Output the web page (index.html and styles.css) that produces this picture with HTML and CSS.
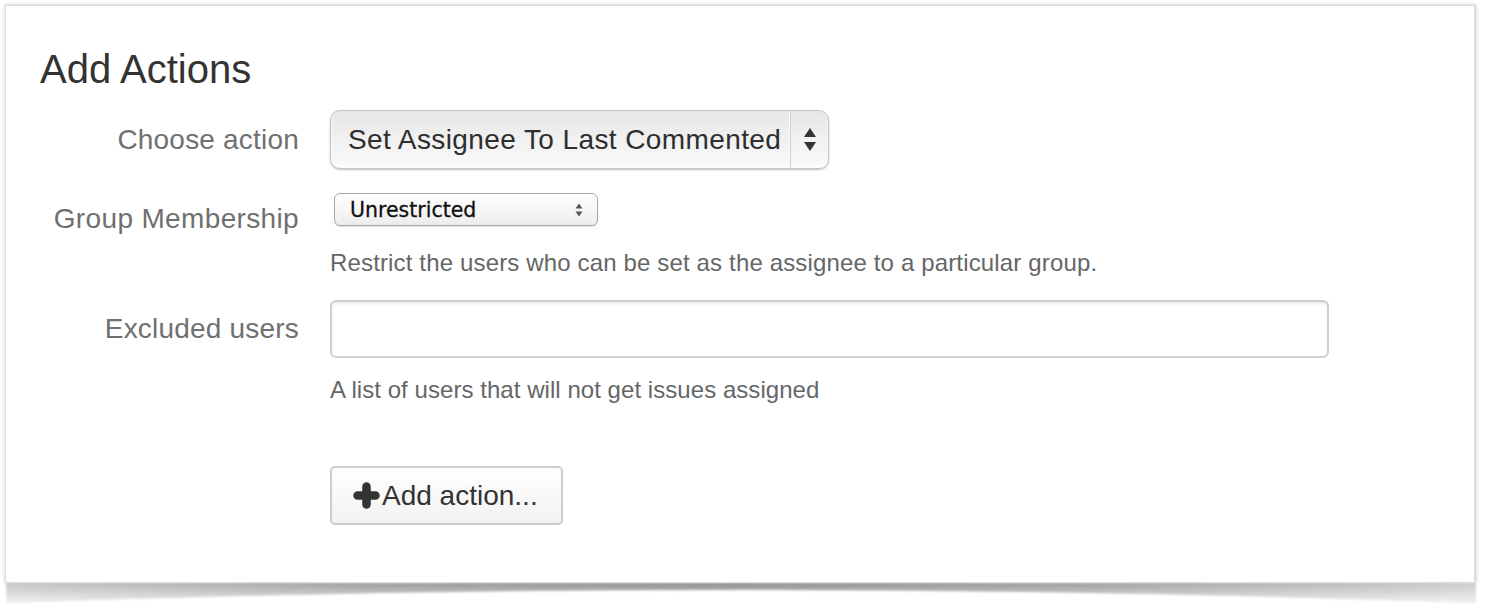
FILE: index.html
```html
<!DOCTYPE html>
<html lang="en">
<head>
<meta charset="utf-8">
<title>Add Actions</title>
<link rel="stylesheet" href="styles.css">
</head>
<body>
<div class="page">
  <div class="card">
    <h2 class="title">Add Actions</h2>
    <div class="form">
      <div class="row row-center">
        <div class="label">Choose action</div>
        <div class="field">
          <div class="big-select">
            <span class="big-select-text">Set Assignee To Last Commented</span>
            <span class="big-select-arrows">
              <svg width="14" height="26" viewBox="0 0 14 26"><path d="M1 10 L7 1 L13 10 Z" fill="#333"/><path d="M1 15 L7 24 L13 15 Z" fill="#333"/></svg>
            </span>
          </div>
        </div>
      </div>
      <div class="row row-2">
        <div class="label label-low">Group Membership</div>
        <div class="field">
          <div class="small-select">
            <span class="small-select-text">Unrestricted</span>
            <svg class="small-arrows" width="8" height="14" viewBox="0 0 8 14"><path d="M0.5 5.5 L4 0.5 L7.5 5.5 Z" fill="#555"/><path d="M0.5 8.5 L4 13.5 L7.5 8.5 Z" fill="#555"/></svg>
          </div>
          <div class="help help-1">Restrict the users who can be set as the assignee to a particular group.</div>
        </div>
      </div>
      <div class="row row-3">
        <div class="label label-input">Excluded users</div>
        <div class="field">
          <div class="text-input"></div>
          <div class="help help-2">A list of users that will not get issues assigned</div>
        </div>
      </div>
      <div class="row row-4">
        <div class="label"></div>
        <div class="field">
          <button class="add-btn" type="button">
            <svg class="plus" width="27" height="27" viewBox="0 0 27 27"><path d="M13.5 4.5 V22.5 M4.5 13.5 H22.5" stroke="#333" stroke-width="8.5" stroke-linecap="round" fill="none"/></svg>
            <span>Add action...</span>
          </button>
        </div>
      </div>
    </div>
  </div>
  <svg class="curl" width="1472" height="24" viewBox="0 0 1472 24">
    <defs>
      <linearGradient id="gh" x1="0" y1="0" x2="1" y2="0">
        <stop offset="0" stop-color="#c6c6c6"/>
        <stop offset="0.25" stop-color="#9c9c9c"/>
        <stop offset="0.5" stop-color="#8e8e8e"/>
        <stop offset="0.75" stop-color="#a0a0a0"/>
        <stop offset="1" stop-color="#cbcbcb"/>
      </linearGradient>
      <linearGradient id="gv" x1="0" y1="0" x2="0" y2="1">
        <stop offset="0" stop-color="#fff" stop-opacity="0"/>
        <stop offset="1" stop-color="#fff" stop-opacity="0.75"/>
      </linearGradient>
      <filter id="bl" x="-5%" y="-50%" width="110%" height="200%">
        <feGaussianBlur stdDeviation="1"/>
      </filter>
    </defs>
    <g filter="url(#bl)">
      <path d="M1 0 H1471 V20 Q736 -6 1 20 Z" fill="url(#gh)"/>
      <path d="M1 0 H1471 V20 Q736 -6 1 20 Z" fill="url(#gv)"/>
    </g>
  </svg>
</div>
</body>
</html>
```
FILE: styles.css
```css
html, body {
  margin: 0;
  padding: 0;
  background: #ffffff;
}

body {
  font-family: "Liberation Sans", Arial, Helvetica, sans-serif;
  color: #333333;
}

.page {
  padding: 5px 0 0 5px;
}

.card {
  width: 1470px;
  box-sizing: border-box;
  border: 1px solid #dcdcdc;
  background: #ffffff;
  box-shadow: 0 0 4px rgba(0, 0, 0, 0.18), 2px 0 3px rgba(0, 0, 0, 0.08);
  padding: 41px 0 57px 34px;
}

.title {
  margin: 0;
  font-size: 40px;
  line-height: 45px;
  font-weight: normal;
  color: #333333;
}

.form {
  margin-top: 18px;
}

.row {
  display: flex;
  align-items: flex-start;
}

.row-center {
  align-items: center;
}

.row-2 {
  margin-top: 24px;
}

.row-3 {
  margin-top: 22px;
}

.row-4 {
  margin-top: 61px;
}

.label {
  width: 259px;
  margin-right: 31px;
  text-align: right;
  font-size: 28px;
  line-height: 59px;
  letter-spacing: 0.2px;
  color: #707070;
  flex: none;
}

.label-low {
  line-height: 33px;
  padding-top: 9px;
  letter-spacing: 0.35px;
}

.label-input {
  line-height: 58px;
}

.field {
  display: flex;
  flex-direction: column;
  align-items: flex-start;
}

.big-select {
  width: 499px;
  height: 59px;
  box-sizing: border-box;
  border: 1px solid #c6c6c6;
  border-radius: 10px;
  background: linear-gradient(#e6e6e6, #f0f0f0 45%, #f6f6f6 80%, #fbfbfb);
  box-shadow: 0 1px 2px rgba(0, 0, 0, 0.28), inset 0 -2px 3px rgba(255, 255, 255, 0.9);
  display: flex;
  align-items: center;
}

.big-select-text {
  padding-left: 17px;
  font-size: 28px;
  letter-spacing: 0.4px;
  color: #2e2e2e;
  flex: 1;
  white-space: nowrap;
}

.big-select-arrows {
  width: 37px;
  height: 100%;
  border-left: 1px solid #d2d2d2;
  box-shadow: -1px 0 0 #fafafa;
  display: flex;
  align-items: center;
  justify-content: center;
}

.small-select {
  margin-left: 4px;
  width: 264px;
  height: 33px;
  box-sizing: border-box;
  border: 1px solid #a8a8a8;
  border-radius: 6px;
  background: linear-gradient(#ffffff, #f7f7f7 50%, #ececec);
  box-shadow: 0 1px 1px rgba(0, 0, 0, 0.12);
  display: flex;
  align-items: center;
}

.small-select-text {
  flex: 1;
  padding-left: 15px;
  font-family: "DejaVu Sans", Verdana, sans-serif;
  font-size: 20.5px;
  color: #111111;
  -webkit-text-stroke: 0.3px #111111;
}

.small-arrows {
  margin-right: 14px;
}

.help {
  font-size: 24px;
  line-height: 30px;
  color: #666666;
}

.help-1 {
  margin-top: 22px;
  letter-spacing: 0.15px;
}

.help-2 {
  margin-top: 17px;
  letter-spacing: 0.05px;
}

.text-input {
  width: 999px;
  height: 58px;
  box-sizing: border-box;
  border: 2px solid #cfcfcf;
  border-radius: 6px;
  background: #ffffff;
  box-shadow: inset 0 2px 3px rgba(0, 0, 0, 0.08);
}

.add-btn {
  width: 233px;
  height: 59px;
  box-sizing: border-box;
  border: 2px solid #cdcdcd;
  border-radius: 5px;
  background: linear-gradient(#ffffff, #f2f2f2);
  padding: 0 0 0 21px;
  display: flex;
  align-items: center;
  font-family: "Liberation Sans", Arial, Helvetica, sans-serif;
  font-size: 28px;
  color: #333333;
  cursor: pointer;
}

.plus {
  flex: none;
  margin-right: 2px;
}

.curl {
  display: block;
}
```
